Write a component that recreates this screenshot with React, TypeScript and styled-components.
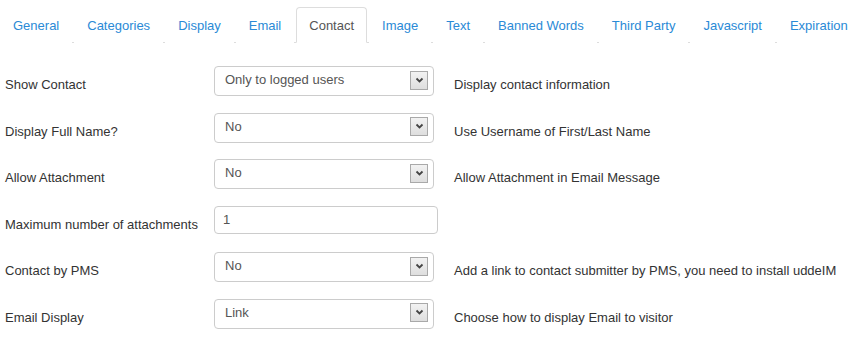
import React from 'react';
import styled, { createGlobalStyle } from 'styled-components';

const GlobalStyle = createGlobalStyle`
  html, body {
    margin: 0;
    padding: 0;
    background: #fff;
  }
  body {
    font-family: "Liberation Sans", Arial, sans-serif;
    font-size: 13px;
    color: #333;
  }
`;

const tabs = [
  'General',
  'Categories',
  'Display',
  'Email',
  'Contact',
  'Image',
  'Text',
  'Banned Words',
  'Third Party',
  'Javascript',
  'Expiration',
];

type Field =
  | { label: string; kind: 'select'; value: string; help: string }
  | { label: string; kind: 'input'; value: string; help?: string };

const fields: Field[] = [
  {
    label: 'Show Contact',
    kind: 'select',
    value: 'Only to logged users',
    help: 'Display contact information',
  },
  {
    label: 'Display Full Name?',
    kind: 'select',
    value: 'No',
    help: 'Use Username of First/Last Name',
  },
  {
    label: 'Allow Attachment',
    kind: 'select',
    value: 'No',
    help: 'Allow Attachment in Email Message',
  },
  { label: 'Maximum number of attachments', kind: 'input', value: '1' },
  {
    label: 'Contact by PMS',
    kind: 'select',
    value: 'No',
    help: 'Add a link to contact submitter by PMS, you need to install uddeIM',
  },
  {
    label: 'Email Display',
    kind: 'select',
    value: 'Link',
    help: 'Choose how to display Email to visitor',
  },
];

const Chevron = () => (
  <svg width="9" height="7" viewBox="0 0 9 7">
    <path d="M1.5 1.5 L4.5 4.5 L7.5 1.5" fill="none" stroke="#444" strokeWidth="1.8" />
  </svg>
);

const App: React.FC = () => (
  <>
    <GlobalStyle />
    <Page>
      <TabBar>
        {tabs.map(t => (
          <Tab key={t} $active={t === 'Contact'}>
            {t}
          </Tab>
        ))}
      </TabBar>
      <Form>
        {fields.map(f => (
          <Row key={f.label}>
            <Label>{f.label}</Label>
            {f.kind === 'select' ? (
              <Select>
                <SelectValue>{f.value}</SelectValue>
                <ArrowBox>
                  <Chevron />
                </ArrowBox>
              </Select>
            ) : (
              <TextInput defaultValue={f.value} />
            )}
            {f.help && <Help>{f.help}</Help>}
          </Row>
        ))}
      </Form>
    </Page>
  </>
);

const Page = styled.div`
  width: 861px;
  height: 350px;
  padding-top: 7px;
  box-sizing: border-box;
  overflow: hidden;
`;

const TabBar = styled.ul`
  display: flex;
  margin: 0;
  padding: 0;
  list-style: none;
  border-bottom: 1px solid #ddd;
  height: 35px;
`;

const Tab = styled.li<{ $active?: boolean }>`
  margin-right: 2px;
  padding: 9px 12px 7px;
  line-height: 18px;
  font-size: 13px;
  border: 1px solid ${p => (p.$active ? '#ddd' : 'transparent')};
  border-bottom-color: ${p => (p.$active ? '#fff' : 'transparent')};
  border-radius: 4px 4px 0 0;
  background: #fff;
  color: ${p => (p.$active ? '#555' : '#2a8ad6')};
  white-space: nowrap;
  height: 18px;
`;

const Form = styled.div`
  display: flex;
  flex-direction: column;
  gap: 17.6px;
  padding: 23px 0 0 5px;
`;

const Row = styled.div`
  display: flex;
  align-items: flex-start;
  height: 29px;
`;

const Label = styled.div`
  width: 209px;
  padding-top: 10px;
  line-height: 18px;
  color: #333;
  white-space: nowrap;
`;

const Select = styled.div`
  box-sizing: border-box;
  width: 220px;
  height: 30px;
  border: 1px solid #ccc;
  border-radius: 4px;
  display: flex;
  align-items: center;
  justify-content: space-between;
  padding: 0 5px 0 10px;
  background: #fff;
`;

const SelectValue = styled.span`
  color: #555;
  line-height: 18px;
  margin-top: -2px;
`;

const ArrowBox = styled.span`
  box-sizing: border-box;
  width: 18px;
  height: 19px;
  margin-top: -2px;
  border: 1px solid #a9a9a9;
  background: linear-gradient(#f2f2f2, #dedede);
  display: flex;
  align-items: center;
  justify-content: center;
`;

const TextInput = styled.input`
  box-sizing: border-box;
  width: 224px;
  height: 28px;
  margin: 0;
  padding: 0 8px;
  border: 1px solid #ccc;
  border-radius: 4px;
  font-family: inherit;
  font-size: 13px;
  color: #555;
  outline: none;
`;

const Help = styled.div`
  margin-left: 20px;
  padding-top: 10px;
  line-height: 18px;
  color: #333;
  white-space: nowrap;
`;

export default App;
